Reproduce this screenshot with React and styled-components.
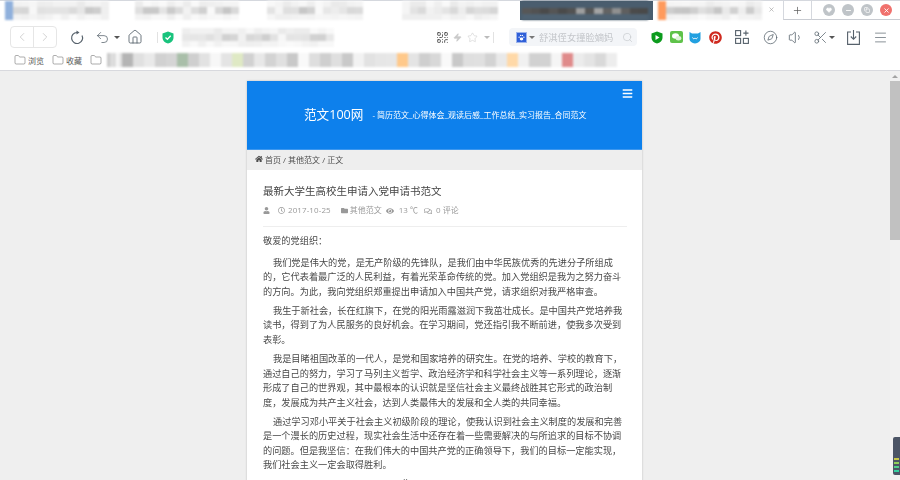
import React from 'react';
import styled, { createGlobalStyle } from 'styled-components';
import { FaHome, FaUser, FaRegClock, FaFolder, FaEye, FaRegComments, FaBars, FaPinterest } from 'react-icons/fa';
import {
  ChevronLeft, ChevronRight, Undo2, House, Star, Zap, Search, QrCode, Compass, Volume1,
  Scissors, Menu, Folder, Plus, X, Minus, Copy, Heart,
} from 'lucide-react';

const Global = createGlobalStyle`
  html, body { margin: 0; padding: 0; height: 480px; overflow: hidden; background: #efefef; }
  body { font-family: "Open Sans", "Liberation Sans", "Noto Sans CJK SC", sans-serif; }
`;

const Page = styled.div`
  width: 900px;
  height: 480px;
  display: flex;
  flex-direction: column;
  position: relative;
  overflow: hidden;
`;

/* browser chrome */
const TabStrip = styled.div`
  height: 20px;
  flex: none;
  display: flex;
  background: #fff;
  border-top: 1px solid #d5d8de;
  box-sizing: border-box;
`;
const Tab = styled.div`
  width: ${(p) => p.$w}px;
  margin-left: ${(p) => p.$ml || 0}px;
  display: flex;
  align-items: center;
  position: relative;
  background: ${(p) => (p.$dark ? '#4a5d6e' : 'transparent')};
`;
const Blur = styled.div`
  display: flex;
  flex-direction: column;
  filter: blur(1px);
  margin-left: ${(p) => p.$ml || 0}px;
`;
const MosaicRow = styled.div`
  display: flex;
  height: ${(p) => p.$h}px;
`;
const Cell = styled.div`
  width: ${(p) => p.$w}px;
  background: ${(p) => p.$c};
`;
const TabClose = styled.span`
  position: absolute;
  right: 8px;
  top: 5px;
  color: #999;
  display: flex;
`;
const NewTab = styled.div`
  width: 29px;
  height: 19px;
  border-left: 1px solid #d5d8de;
  border-right: 1px solid #d5d8de;
  border-bottom: 1px solid #c9ccd2;
  box-sizing: border-box;
  display: flex;
  align-items: center;
  justify-content: center;
  color: #555;
`;
const TabTail = styled.div`
  flex: 1;
  height: 19px;
  border-bottom: 1px solid #c9ccd2;
  box-sizing: border-box;
  display: flex;
  align-items: center;
  padding-left: 11px;
  gap: 7px;
`;
const WinBtn = styled.span`
  width: 12px;
  height: 12px;
  border-radius: 50%;
  background: ${(p) => p.$bg || '#bfc4c8'};
  color: #fff;
  display: flex;
  align-items: center;
  justify-content: center;
`;

const Toolbar = styled.div`
  height: 30px;
  flex: none;
  display: flex;
  align-items: center;
  background: #fff;
  padding: 4px 0 0 10px;
  box-sizing: border-box;
`;
const NavGroup = styled.div`
  width: 47px;
  height: 22px;
  box-sizing: border-box;
  border: 1px solid #e6e6e6;
  border-radius: 4px;
  display: flex;
  color: #c4c4c4;
  > span { flex: 1; display: flex; align-items: center; justify-content: center; }
  > span + span { border-left: 1px solid #e6e6e6; }
`;
const Slot = styled.span`
  width: ${(p) => p.$w}px;
  margin-left: ${(p) => p.$ml || 0}px;
  flex: none;
  display: flex;
  align-items: center;
  justify-content: center;
  color: ${(p) => p.$c || '#56616b'};
`;
const Caret = styled.span`
  width: 0;
  height: 0;
  flex: none;
  margin-left: ${(p) => p.$ml || 0}px;
  border-left: 3px solid transparent;
  border-right: 3px solid transparent;
  border-top: 3px solid ${(p) => p.$c || '#555'};
`;
const VLine = styled.span`
  width: 1px;
  height: 11px;
  flex: none;
  background: #e2e2e2;
  margin-left: ${(p) => p.$ml}px;
`;
const SearchBox = styled.div`
  width: 128px;
  height: 18px;
  margin-left: 15px;
  flex: none;
  background: #f3f5f8;
  border-radius: 4px;
  display: flex;
  align-items: center;
  padding-left: 7px;
  box-sizing: border-box;
  color: #c3c6ca;
  font-size: 9.3px;
  font-family: "Noto Sans CJK SC", sans-serif;
  white-space: nowrap;
`;
const Placeholder = styled.span`
  margin-left: 4px;
  filter: blur(0.2px);
`;
const Paw = styled.span`
  width: 11px;
  height: 11px;
  flex: none;
  background: #2f5fd8;
  border: 1px solid #9db4ec;
  box-sizing: border-box;
  display: flex;
  align-items: center;
  justify-content: center;
`;

const Bookmarks = styled.div`
  height: 20px;
  flex: none;
  display: flex;
  align-items: center;
  background: #fff;
  border-bottom: 1px solid #d8d9de;
  padding-left: 14px;
  box-sizing: content-box;
  font-size: 8px;
  color: #555;
  font-family: "Noto Sans CJK SC", sans-serif;
`;
const Mark = styled.span`
  display: flex;
  align-items: center;
  gap: 2px;
  width: 38px;
  flex: none;
  color: #5a5a5a;
`;

/* page area */
const Viewport = styled.div`
  flex: 1;
  min-height: 0;
  display: flex;
  background: #efefef;
`;
const Main = styled.main`
  flex: 1;
  display: flex;
  justify-content: center;
  padding: 10px 1px 0 0;
  overflow: hidden;
`;
const Card = styled.article`
  width: 395px;
  flex: none;
  background: #fff;
  box-shadow: 0 0 2px #bbb;
  height: 500px;
`;
const Header = styled.header`
  height: 69px;
  background: #0d80ec;
  color: #fff;
  display: flex;
  align-items: center;
  padding: 0 9px 0 57px;
  box-sizing: border-box;
  border-bottom: 1px solid #3d97ee;
`;
const Logo = styled.div`
  font-size: 12.6px;
  font-family: "Open Sans", "Noto Sans CJK SC", sans-serif;
  margin-bottom: 3px;
  filter: blur(0.2px);
`;
const Tagline = styled.div`
  font-size: 8px;
  margin-left: 9px;
  margin-bottom: 1px;
  white-space: nowrap;
  font-family: "Open Sans", "Noto Sans CJK SC", sans-serif;
  filter: blur(0.2px);
`;
const MenuBtn = styled.span`
  margin-left: auto;
  align-self: flex-start;
  margin-top: 7px;
  display: flex;
`;
const Crumbs = styled.nav`
  height: 20px;
  background: #eee;
  display: flex;
  align-items: center;
  gap: 2px;
  padding: 0 0 2px 8px;
  box-sizing: border-box;
  font-size: 8px;
  color: #4d4d4d;
  filter: blur(0.2px);
`;
const Body = styled.div`
  padding: 0 15px 0 16px;
  color: #484848;
  font-size: 9.2px;
  line-height: 14.6px;
  filter: blur(0.25px);
`;
const Title = styled.h1`
  margin: 0;
  padding-top: 12px;
  height: 18px;
  font-size: 10.5px;
  line-height: 18px;
  font-weight: 400;
  color: #444;
  white-space: nowrap;
`;
const Meta = styled.div`
  margin-top: 4px;
  padding: 0 0 9px 0;
  height: 13px;
  display: flex;
  align-items: center;
  font-size: 8px;
  color: #999;
  border-bottom: 1px solid #eee;
  white-space: nowrap;
`;
const MetaItem = styled.span`
  display: flex;
  align-items: center;
  gap: ${(p) => p.$gap || 2}px;
  margin-left: ${(p) => p.$ml || 0}px;
  letter-spacing: ${(p) => p.$ls || 0}px;
`;
const Greeting = styled.p`
  margin: 7px 0 7px;
`;
const Para = styled.p`
  margin: 0 4px 4.4px 0;
  text-indent: ${(p) => p.$indent || 10}px;
`;

const Scrollbar = styled.aside`
  width: 10px;
  flex: none;
  background: #f1f1f1;
  display: flex;
  flex-direction: column;
  align-items: center;
`;
const ScrollUp = styled.span`
  height: 10px;
  display: flex;
  align-items: center;
  &::before {
    content: '';
    border-left: 3px solid transparent;
    border-right: 3px solid transparent;
    border-bottom: 3px solid #a3a3a3;
  }
`;
const Thumb = styled.div`
  width: 100%;
  height: 159px;
  background: #c1c1c1;
`;
const Meter = styled.div`
  position: absolute;
  right: 0;
  top: 437px;
  width: 7px;
  height: 38px;
  background: #4c5566;
  border-radius: 2px 0 0 2px;
  display: flex;
  flex-direction: column;
  justify-content: flex-end;
  gap: 2px;
  padding: 0 1px 3px;
  box-sizing: border-box;
`;
const MeterDot = styled.span`
  height: 2px;
  background: ${(p) => p.$c};
`;

// pseudo random grey so the blurred text keeps looking like a mosaic
const shade = (i, j, base, top = 250) => {
  const n = Math.abs(Math.sin((i + 1) * 12.9898 + (j + 1) * 78.233) * 43758.5453) % 1;
  const v = Math.round(base + n * (top - base));
  return `rgb(${v},${v},${v})`;
};

const Mosaic = ({ cols, seed = 0, accent, base = 196, cell = 8, ml }) => (
  <Blur $ml={ml}>
    {[[6, 234], [7, base], [6, 238]].map(([h, b], r) => (
      <MosaicRow $h={h} key={r}>
        {Array.from({ length: cols }).map((_, i) => (
          <Cell $w={cell} $c={i === 0 && accent ? accent : shade(i + seed, r, b)} key={i} />
        ))}
      </MosaicRow>
    ))}
  </Blur>
);

const DarkMosaic = ({ cols, ml }) => (
  <Blur $ml={ml}>
    <MosaicRow $h={7}>
      {Array.from({ length: cols }).map((_, i) => (
        <Cell $w={9} $c="#4a5d6e" key={i} />
      ))}
    </MosaicRow>
    <MosaicRow $h={6}>
      {Array.from({ length: cols }).map((_, i) => (
        <Cell $w={9} $c={shade(i, 2, 70, i > 5 && i < 11 ? 170 : 110)} key={i} />
      ))}
    </MosaicRow>
    <MosaicRow $h={6}>
      {Array.from({ length: cols }).map((_, i) => (
        <Cell $w={9} $c="#4f6272" key={i} />
      ))}
    </MosaicRow>
  </Blur>
);

const RefreshIcon = () => (
  <svg width="14" height="15" viewBox="0 0 14 15" fill="none" stroke="currentColor" strokeWidth="1.2">
    <path d="M7 2.500A5.500 5.500 0 1 0 12 5.500" />
    <path d="M6.500.5 9.500 2.500 6.500 4.500Z" fill="currentColor" stroke="none" />
  </svg>
);

const AppsIcon = () => (
  <svg width="14" height="14" viewBox="0 0 14 14" fill="none" stroke="currentColor" strokeWidth="1.1">
    <rect x=".6" y=".6" width="5" height="5" />
    <rect x=".6" y="8.400" width="5" height="5" />
    <rect x="8.400" y="8.400" width="5" height="5" />
    <path d="M10.900.5v5.200M8.300 3.100h5.200" />
  </svg>
);

const TrayIcon = () => (
  <svg width="13" height="15" viewBox="0 0 13 15" fill="none" stroke="currentColor" strokeWidth="1.1">
    <path d="M4 2H.6V14.400H12.400V2H9" />
    <path d="M6.500 0V9M3.800 6.500 6.500 9.300 9.200 6.500" />
  </svg>
);

const marks = [
  ['#c9c9c9', 8], ['#b5b5b5', 14], ['#a9bfa9', 15], ['#dfe9c4', 15], ['#c9c9c9', 15], ['#c9c9c9', 15],
  ['#ffc98a', 12], ['#c9c9c9', 12], ['#ffd9a8', 12], ['#e08a8a', 10],
];

const App = () => {
  return (
    <Page>
      <Global />
      <TabStrip>
        <Tab $w={135}><Mosaic cols={13} accent="#8fb0dc" ml={5} /></Tab>
        <Tab $w={132}><Mosaic cols={13} seed={20} /></Tab>
        <Tab $w={135}><Mosaic cols={12} seed={40} /></Tab>
        <Tab $w={118}><Mosaic cols={12} seed={60} base={205} /></Tab>
        <Tab $w={133} $dark><DarkMosaic cols={14} ml={2} /></Tab>
        <Tab $w={130}>
          <Mosaic cols={13} seed={80} accent="#ff9a5c" ml={5} />
          <TabClose><X size={7} /></TabClose>
        </Tab>
        <NewTab><Plus size={11} strokeWidth={1.5} /></NewTab>
        <TabTail>
          <WinBtn><Heart size={6} fill="#fff" /></WinBtn>
          <WinBtn><Minus size={7} strokeWidth={3} /></WinBtn>
          <WinBtn><Copy size={6} strokeWidth={2.5} /></WinBtn>
          <WinBtn $bg="#f0716d"><X size={7} strokeWidth={3} /></WinBtn>
        </TabTail>
      </TabStrip>

      <Toolbar>
        <NavGroup>
          <span><ChevronLeft size={14} strokeWidth={1.3} /></span>
          <span><ChevronRight size={14} strokeWidth={1.3} /></span>
        </NavGroup>
        <Slot $w={24} $ml={8}><RefreshIcon /></Slot>
        <Slot $w={24} $ml={1}><Undo2 size={15} strokeWidth={1.2} /></Slot>
        <Caret $ml={0} />
        <Slot $w={22} $ml={4}><House size={16} strokeWidth={1.3} /></Slot>
        <VLine $ml={11} />
        <Slot $w={14} $ml={3} $c="#19c37d">
          <svg width="12" height="13" viewBox="0 0 12 13">
            <path d="M6 0.5 11.5 2.5V7c0 2.7-2.4 4.6-5.5 5.6C2.900 11.600.5 9.700.5 7V2.500Z" fill="currentColor" />
            <path d="M3.500 6.500 5.400 8.300 8.700 4.800" stroke="#fff" strokeWidth="1.300" fill="none" />
          </svg>
        </Slot>
        <Mosaic cols={19} seed={5} base={205} ml={7} />
        <Slot $w={14} $ml={101} $c="#444"><QrCode size={13} strokeWidth={1.6} /></Slot>
        <Slot $w={14} $ml={1} $c="#c9c9c9"><Zap size={9} fill="#c9c9c9" /></Slot>
        <Slot $w={14} $ml={1} $c="#c9c9c9"><Star size={11} strokeWidth={1.2} /></Slot>
        <Caret $ml={5} $c="#bbb" />
        <VLine $ml={3} />
        <SearchBox>
          <Paw>
            <svg width="7" height="7" viewBox="0 0 8 8" fill="#fff">
              <ellipse cx="4" cy="5.600" rx="2" ry="1.700" /><circle cx="1.300" cy="3.600" r=".8" />
              <circle cx="3" cy="1.600" r=".8" /><circle cx="5" cy="1.600" r=".8" /><circle cx="6.700" cy="3.600" r=".8" />
            </svg>
          </Paw>
          <Caret $ml={2} $c="#777" />
          <Placeholder>舒淇侄女撞脸嫡妈</Placeholder>
          <Slot $w={12} $ml={8} $c="#c0c4c8"><Search size={11} strokeWidth={1.3} /></Slot>
        </SearchBox>
        <Slot $w={14} $ml={13}>
          <svg width="12" height="13" viewBox="0 0 12 13">
            <path d="M6 .5 11.500 2.500V7c0 2.700-2.400 4.600-5.500 5.600C2.900 11.600.5 9.700.5 7V2.500Z" fill="#0c9b1d" />
            <path d="M4.500 4v5L8.500 6.500Z" fill="#fff" />
          </svg>
        </Slot>
        <Slot $w={14} $ml={5}>
          <svg width="13" height="12" viewBox="0 0 13 12">
            <rect width="13" height="12" rx="2" fill="#5fc24a" />
            <ellipse cx="5.500" cy="5" rx="3.500" ry="2.800" fill="#fff" />
            <ellipse cx="8.500" cy="7.300" rx="2.800" ry="2.200" fill="#dff3da" />
          </svg>
        </Slot>
        <Slot $w={14} $ml={5}>
          <svg width="12" height="13" viewBox="0 0 12 13">
            <path d="M.5 1 3 2.500H9L11.500 1V8c0 2.500-2.500 4-5.500 4.500C3 12 .5 10.500.5 8Z" fill="#22a0e0" />
            <path d="M3.500 6.500c.5 1.500 1.500 1.500 2.500.5 1 1 2 1 2.500-.5" stroke="#fff" fill="none" />
          </svg>
        </Slot>
        <Slot $w={14} $ml={6} $c="#cf2a1f"><FaPinterest size={13} /></Slot>
        <Slot $w={16} $ml={12}><AppsIcon /></Slot>
        <Slot $w={16} $ml={12}><Compass size={15} strokeWidth={1.2} /></Slot>
        <Slot $w={16} $ml={10}><Volume1 size={17} strokeWidth={1.2} /></Slot>
        <Slot $w={16} $ml={8}><Scissors size={15} strokeWidth={1.2} /></Slot>
        <Caret $ml={1} />
        <Slot $w={16} $ml={10}><TrayIcon /></Slot>
        <Slot $w={16} $ml={11}><Menu size={15} strokeWidth={1.1} /></Slot>
      </Toolbar>

      <Bookmarks>
        <Mark><Folder size={12} strokeWidth={1} />浏览</Mark>
        <Mark><Folder size={12} strokeWidth={1} />收藏</Mark>
        <Folder size={12} strokeWidth={1} />
        <Blur $ml={5}>
          <MosaicRow $h={14}>
            {marks.map(([c, n], i) =>
              Array.from({ length: 5 }).map((_, j) => (
                <Cell $w={n === 8 ? 3 : 11} $c={j === 0 ? c : shade(j + i * 7, 1, 205)} key={`${i}-${j}`} />
              ))
            )}
          </MosaicRow>
        </Blur>
      </Bookmarks>

      <Viewport>
        <Main>
          <Card>
            <Header>
              <Logo>范文100网</Logo>
              <Tagline>- 简历范文_心得体会_观读后感_工作总结_实习报告_合同范文</Tagline>
              <MenuBtn><FaBars size={11} /></MenuBtn>
            </Header>
            <Crumbs>
              <FaHome size={8} /> 首页 / 其他范文 / 正文
            </Crumbs>
            <Body>
              <Title>最新大学生高校生申请入党申请书范文</Title>
              <Meta>
                <MetaItem><FaUser size={7} /></MetaItem>
                <MetaItem $ml={8} $gap={3} $ls={0.1}><FaRegClock size={7} />2017-10-25</MetaItem>
                <MetaItem $ml={10}><FaFolder size={7} />其他范文</MetaItem>
                <MetaItem $ml={4} $gap={5}><FaEye size={8} />13 ℃</MetaItem>
                <MetaItem $ml={6} $gap={4}><FaRegComments size={8} />0 评论</MetaItem>
              </Meta>
              <Greeting>敬爱的党组织：</Greeting>
              <Para>我们党是伟大的党，是无产阶级的先锋队，是我们由中华民族优秀的先进分子所组成的，它代表着最广泛的人民利益，有着光荣革命传统的党。加入党组织是我为之努力奋斗的方向。为此，我向党组织郑重提出申请加入中国共产党，请求组织对我严格审查。</Para>
              <Para>我生于新社会，长在红旗下，在党的阳光雨露滋润下我茁壮成长。是中国共产党培养我读书，得到了为人民服务的良好机会。在学习期间，党还指引我不断前进，使我多次受到表彰。</Para>
              <Para>我是目睹祖国改革的一代人，是党和国家培养的研究生。在党的培养、学校的教育下，通过自己的努力，学习了马列主义哲学、政治经济学和科学社会主义等一系列理论，逐渐形成了自己的世界观，其中最根本的认识就是坚信社会主义最终战胜其它形式的政治制度，发展成为共产主义社会，达到人类最伟大的发展和全人类的共同幸福。</Para>
              <Para>通过学习邓小平关于社会主义初级阶段的理论，使我认识到社会主义制度的发展和完善是一个漫长的历史过程，现实社会生活中还存在着一些需要解决的与所追求的目标不协调的问题。但是我坚信：在我们伟大的中国共产党的正确领导下，我们的目标一定能实现，我们社会主义一定会取得胜利。</Para>
              <Para $indent={138}>此</Para>
            </Body>
          </Card>
        </Main>
        <Scrollbar>
          <ScrollUp />
          <Thumb />
        </Scrollbar>
      </Viewport>
      <Meter>
        <MeterDot $c="#c8c84a" />
        <MeterDot $c="#8fd05a" />
        <MeterDot $c="#4fd08a" />
        <MeterDot $c="#35d0a0" />
      </Meter>
    </Page>
  );
};

export default App;
